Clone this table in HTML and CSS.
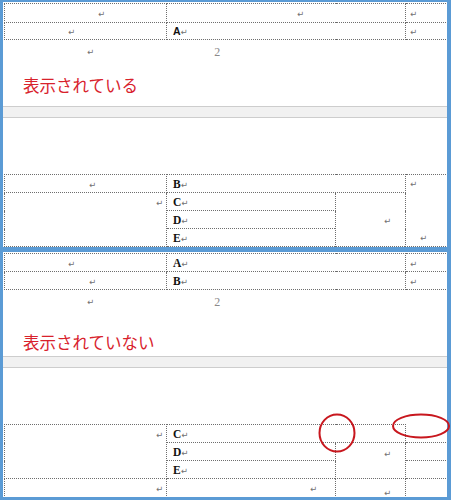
FILE: index.html
```html
<!DOCTYPE html>
<html lang="ja">
<head>
<meta charset="utf-8">
<title>表示されている / 表示されていない</title>
<link rel="stylesheet" href="styles.css">
</head>
<body>
<section class="panel panel-top">
  <table class="grid first">
    <colgroup><col class="c1"><col class="c2"><col class="c3"><col class="c4"></colgroup>
    <tr class="h19">
      <td class="pl93"><span class="ret">↵</span></td>
      <td colspan="2" class="pl130"><span class="ret">↵</span></td>
      <td class="pl4"><span class="ret">↵</span></td>
    </tr>
    <tr class="h17">
      <td class="pl63"><span class="ret">↵</span></td>
      <td colspan="2" class="pl6"><span class="lt sans">A</span><span class="ret">↵</span></td>
      <td class="pl4"><span class="ret">↵</span></td>
    </tr>
  </table>
  <div class="marks"><span class="ret">↵</span><span class="num">2</span></div>
  <p class="caption cap-top">表示されている</p>
  <div class="band band-top"></div>
  <table class="grid lower">
    <colgroup><col class="c1"><col class="c2"><col class="c3"><col class="c4"></colgroup>
    <tr class="h18">
      <td class="pl84"><span class="ret">↵</span></td>
      <td colspan="2" class="pl6"><span class="lt">B</span><span class="ret">↵</span></td>
      <td rowspan="4" class="top">
        <div class="stack"><span class="ret pl4">↵</span><span class="ret pl14">↵</span></div>
      </td>
    </tr>
    <tr class="h18">
      <td rowspan="3" class="top right pt2 pr3"><span class="ret">↵</span></td>
      <td class="pl6"><span class="lt">C</span><span class="ret">↵</span></td>
      <td rowspan="3" class="pl48"><span class="ret">↵</span></td>
    </tr>
    <tr class="h18">
      <td class="pl6"><span class="lt">D</span><span class="ret">↵</span></td>
    </tr>
    <tr class="h18">
      <td class="pl6"><span class="lt">E</span><span class="ret">↵</span></td>
    </tr>
  </table>
</section>

<section class="panel panel-bottom">
  <table class="grid first">
    <colgroup><col class="c1"><col class="c2"><col class="c3"><col class="c4"></colgroup>
    <tr class="h18">
      <td class="pl63"><span class="ret">↵</span></td>
      <td colspan="2" class="pl6"><span class="lt">A</span><span class="ret">↵</span></td>
      <td class="pl4"><span class="ret">↵</span></td>
    </tr>
    <tr class="h18">
      <td class="pl84"><span class="ret">↵</span></td>
      <td colspan="2" class="pl6"><span class="lt">B</span><span class="ret">↵</span></td>
      <td class="pl4"><span class="ret">↵</span></td>
    </tr>
  </table>
  <div class="marks"><span class="ret">↵</span><span class="num">2</span></div>
  <p class="caption cap-bottom">表示されていない</p>
  <div class="band band-bottom"></div>
  <table class="grid lower">
    <colgroup><col class="c1"><col class="c2"><col class="c3"><col class="c4"></colgroup>
    <tr class="h18">
      <td rowspan="3" class="top right pt2 pr3"><span class="ret">↵</span></td>
      <td colspan="2" class="pl6"><span class="lt">C</span><span class="ret">↵</span></td>
      <td class="open"></td>
    </tr>
    <tr class="h18">
      <td class="pl6"><span class="lt">D</span><span class="ret">↵</span></td>
      <td rowspan="2" class="top pt3 pl48"><span class="ret">↵</span></td>
      <td></td>
    </tr>
    <tr class="h18">
      <td class="pl6"><span class="lt">E</span><span class="ret">↵</span></td>
      <td></td>
    </tr>
    <tr class="h19">
      <td class="right pr3"><span class="ret">↵</span></td>
      <td class="right pr18"><span class="ret">↵</span></td>
      <td class="bottom pl48"><span class="ret low">↵</span></td>
      <td></td>
    </tr>
  </table>
</section>

<svg class="marker" width="451" height="500" viewBox="0 0 451 500" aria-hidden="true">
  <ellipse cx="337" cy="433" rx="17.5" ry="18.5" fill="none" stroke="#c8171e" stroke-width="2"/>
  <ellipse cx="421" cy="426" rx="28" ry="11.5" fill="none" stroke="#c8171e" stroke-width="2"/>
</svg>
</body>
</html>
```

FILE: styles.css
```css
* { box-sizing: border-box; }
html, body { margin: 0; padding: 0; }
body {
  width: 451px;
  height: 500px;
  overflow: hidden;
  background: #fff;
  font-family: "Liberation Serif", serif;
  position: relative;
}

.panel {
  border-style: solid;
  border-color: #5b9bd5;
  overflow: hidden;
  background: #fff;
}
.panel-top { height: 249px; border-width: 2px 4px 2px 3px; }
.panel-bottom { height: 251px; border-width: 3px 4px 3px 3px; }

.grid {
  border-collapse: collapse;
  table-layout: fixed;
  width: 443px;
  margin-left: 1px;
}
.grid.first { margin-top: 1px; }
.grid.lower { margin-top: 56px; }
col.c1 { width: 162px; }
col.c2 { width: 169px; }
col.c3 { width: 70px; }
col.c4 { width: 42px; }

.grid td {
  border: 1px dotted #6e6e6e;
  padding: 0;
  line-height: 12px;
  white-space: nowrap;
  vertical-align: middle;
  overflow: hidden;
}
.grid td.open { border-top: hidden; border-right: hidden; }

.h17 td { height: 17px; }
.h18 td { height: 18px; }
.h19 td { height: 19px; }

td.top { vertical-align: top; }
td.bottom { vertical-align: bottom; }
td.right { text-align: right; }
.pt2 { padding-top: 2px !important; }
.pt3 { padding-top: 3px !important; }
.pr3 { padding-right: 3px !important; }
.pr18 { padding-right: 18px !important; }
.pl4 { padding-left: 4px !important; }
.pl6 { padding-left: 6px !important; }
.pl14 { padding-left: 14px !important; }
.pl48 { padding-left: 48px !important; }
.pl63 { padding-left: 63px !important; }
.pl84 { padding-left: 84px !important; }
.pl93 { padding-left: 93px !important; }
.pl130 { padding-left: 130px !important; }

.stack {
  display: flex;
  flex-direction: column;
  justify-content: space-between;
  height: 66px;
  margin-top: 3px;
}

.ret {
  font-family: "DejaVu Sans", sans-serif;
  font-size: 8.5px;
  color: #6f6f6f;
  line-height: 12px;
}
.ret.low { position: relative; top: 2px; }

.lt {
  font-family: "Liberation Serif", serif;
  font-weight: bold;
  font-size: 11.5px;
  color: #111;
}
.lt.sans { font-family: "Liberation Sans", sans-serif; font-size: 10.5px; }

.marks {
  display: flex;
  align-items: center;
  height: 24px;
  padding-left: 84px;
}
.num {
  margin-left: 120px;
  font-family: "Liberation Serif", serif;
  font-size: 12px;
  color: #8a8a8a;
}

.caption {
  margin: 0;
  padding-left: 20px;
  font-family: "Noto Sans CJK JP", sans-serif;
  font-size: 16.5px;
  line-height: 22px;
  color: #d8222c;
}
.cap-top { margin-top: 10px; }
.cap-bottom { margin-top: 17px; }

.band {
  height: 12px;
  background: #f1f1f1;
  border-top: 1px solid #cdcdcd;
  border-bottom: 1px solid #cdcdcd;
}
.band-top { margin-top: 10px; }
.band-bottom { margin-top: 3px; }

.marker {
  position: absolute;
  left: 0;
  top: 0;
  pointer-events: none;
}
```
